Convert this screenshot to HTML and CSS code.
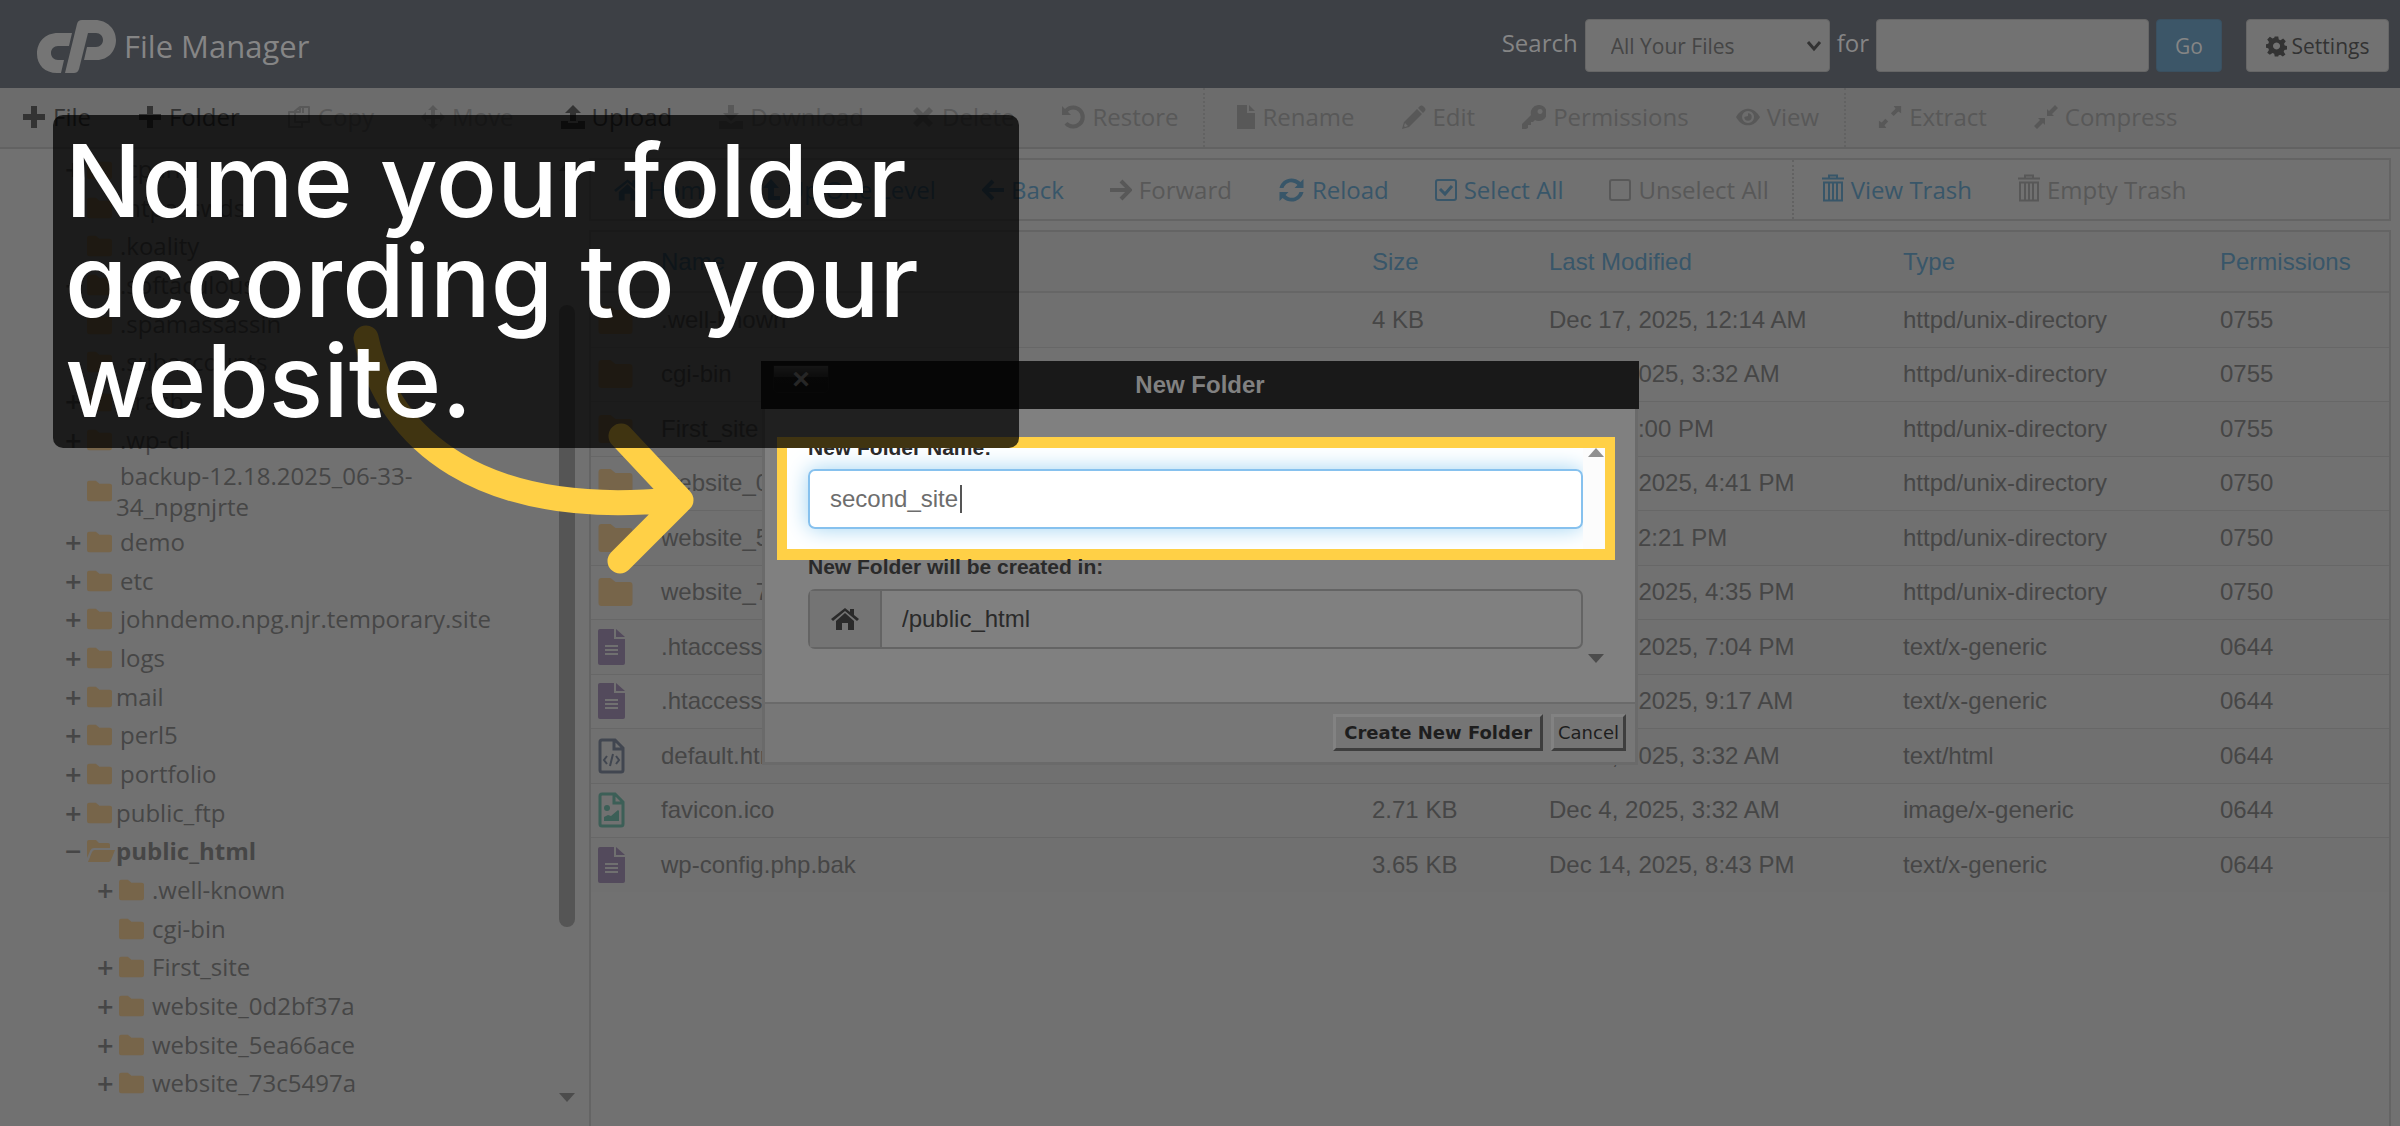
FILE: index.html
```html
<!DOCTYPE html>
<html lang="en">
<head>
    <meta charset="UTF-8">
    <meta name="viewport" content="width=device-width, initial-scale=1.0">
    <title>cPanel File Manager</title>
    <link rel="stylesheet" href="styles.css">
</head>
<body>

    <!-- icon sprite -->
    <svg class="sprite" aria-hidden="true">
        <symbol id="i-plus" viewBox="0 0 24 24"><path d="M9 1h6v8h8v6h-8v8H9v-8H1V9h8z"/></symbol>
        <symbol id="i-copy" viewBox="0 0 24 24"><path d="M8 6l5-4h9v15H8zM13 2v5H8M16 2v6M8 7H2v15h13v-5" fill="none" stroke="currentColor" stroke-width="2" stroke-linejoin="round"/></symbol>
        <symbol id="i-move" viewBox="0 0 24 24"><path d="M12 0l5 5h-3v5h5V7l5 5-5 5v-3h-5v5h3l-5 5-5-5h3v-5H5v3l-5-5 5-5v3h5V5H7z"/></symbol>
        <symbol id="i-upload" viewBox="0 0 24 24"><path d="M12 0l8 8h-5v8H9V8H4zM0 16h7v2h10v-2h7v8H0z"/></symbol>
        <symbol id="i-download" viewBox="0 0 24 24"><path d="M9 0h6v8h5l-8 8-8-8h5zM0 16h7l5 3 5-3h7v8H0z"/></symbol>
        <symbol id="i-delete" viewBox="0 0 24 24"><path d="M6 2l6 6 6-6 4 4-6 6 6 6-4 4-6-6-6 6-4-4 6-6-6-6z"/></symbol>
        <symbol id="i-restore" viewBox="0 0 24 24"><path d="M1 1l3 3a11.500 11.500 0 1 1-.5 15.500l3-2.500a7.500 7.500 0 1 0 .3-10.200L10 10H1z"/></symbol>
        <symbol id="i-rename" viewBox="0 0 18 24"><path d="M0 0h10v8h8v16H0zM12 0l6 6h-6z"/></symbol>
        <symbol id="i-edit" viewBox="0 0 24 24"><path d="M15 4l5 5L7 22l-7 2 2-7zM3 18l-1 3 1 1 3-1zM17 2c2-2 3-2 5 0s2 3 0 5l-1 1-5-5z" fill-rule="evenodd"/></symbol>
        <symbol id="i-key" viewBox="0 0 24 24"><path d="M16 0a8 8 0 1 1-3 15l-2 2H9v3H6v3l-2 1H0v-5l9-9A8 8 0 0 1 16 0zM18 4a2.500 2.500 0 1 0 .1 0z" fill-rule="evenodd"/></symbol>
        <symbol id="i-eye" viewBox="0 0 26 24"><path d="M13 3c6 0 10 4 13 9-3 5-7 9-13 9S3 17 0 12c3-5 7-9 13-9zm0 2.500a6.500 6.500 0 1 0 .1 0zM13 8v3l-4 1a4 4 0 1 0 4-4z" fill-rule="evenodd"/></symbol>
        <symbol id="i-extract" viewBox="0 0 26 24"><path d="M25 0v8l-3-2-5 5-3-3 5-5-2-3zM1 24v-8l3 2 4-4 3 3-4 4 2 3z"/></symbol>
        <symbol id="i-compress" viewBox="0 0 24 24"><path d="M13 11V4l2 2 6-6 3 3-6 6 2 2zM11 13v7l-2-2-6 6-3-3 6-6-2-2z"/></symbol>
        <symbol id="i-home" viewBox="0 0 28 24"><path d="M14 1l5 4V2h4v6l5 4-2 2L14 4 2 14l-2-2zM14 6l9 8v9h-6v-7h-6v7H5v-9z"/></symbol>
        <symbol id="i-up" viewBox="0 0 18 24"><path d="M6 22V10H1l8-9 8 9h-5v8h6v4z"/></symbol>
        <symbol id="i-left" viewBox="0 0 22 24"><path d="M11 3L2 12l9 9M2 12h20" fill="none" stroke="currentColor" stroke-width="4"/></symbol>
        <symbol id="i-right" viewBox="0 0 22 24"><path d="M11 3l9 9-9 9M20 12H0" fill="none" stroke="currentColor" stroke-width="4"/></symbol>
        <symbol id="i-reload" viewBox="0 0 26 24"><path d="M1 10C3 1 14-3 22 4l3-3v9h-9l3-3C14 2 7 4 5 10zM25 14c-2 9-13 13-21 6l-3 3v-9h9l-3 3c5 5 12 3 14-3z"/></symbol>
        <symbol id="i-check" viewBox="0 0 22 24"><rect x="1" y="2" width="20" height="20" rx="2" fill="none" stroke="currentColor" stroke-width="2"/><path d="M5 11l5 5 7-8" fill="none" stroke="currentColor" stroke-width="3"/></symbol>
        <symbol id="i-square" viewBox="0 0 22 24"><rect x="1" y="2" width="20" height="20" rx="2" fill="none" stroke="currentColor" stroke-width="2"/></symbol>
        <symbol id="i-trash" viewBox="0 0 22 27"><path d="M0 4h22M7 4V1h8v3" fill="none" stroke="currentColor" stroke-width="2"/><path d="M2 8h18v18H2zM7 8v18M11 8v18M15 8v18" fill="none" stroke="currentColor" stroke-width="2"/></symbol>
        <symbol id="i-gear" viewBox="0 0 24 24"><path d="M10 1h4l.6 3.500 2 1 3-2 3 3-2 3 .8 2 3 .5v4l-3.400.6-.8 2 2 3-3 2.400-3-2-2 .8L14 24h-4l-.6-3.200-2-.8-3 2-3-2.400 2-3-.8-2L0 14v-4l2.600-.5.8-2-2-3 3-3 3 2 2-1zM12 8a4 4 0 1 0 .1 0z" fill-rule="evenodd"/></symbol>
        <symbol id="i-folder" viewBox="0 0 34 28"><path d="M3 0h9l5 4h14a3 3 0 0 1 3 3v18a3 3 0 0 1-3 3H3a3 3 0 0 1-3-3V3a3 3 0 0 1 3-3z"/></symbol>
        <symbol id="i-folder-open" viewBox="0 0 28 22"><path d="M2 0h7l3 3h9a2 2 0 0 1 2 2v3H7c-2 0-3 1-4 3l-3 7V2a2 2 0 0 1 2-2zM8 10h20l-4 10a3 3 0 0 1-3 2H1l4-10c1-1 1-2 3-2z"/></symbol>
        <symbol id="i-text" viewBox="0 0 27 36"><path d="M2 0h14v10h11v24a2 2 0 0 1-2 2H2a2 2 0 0 1-2-2V2a2 2 0 0 1 2-2zM18 0l9 8h-9zM7 16v2h13v-2zM7 20v2h13v-2zM7 24v2h13v-2z" fill-rule="evenodd"/></symbol>
        <symbol id="i-code" viewBox="0 0 27 36"><path d="M4 2h13l8 8v22a2 2 0 0 1-2 2H4a2 2 0 0 1-2-2V4a2 2 0 0 1 2-2zM16 2v9h9" fill="none" stroke="currentColor" stroke-width="3"/><path d="M9 18l-3 4 3 4M18 18l3 4-3 4M15 16l-3 12" fill="none" stroke="currentColor" stroke-width="2"/></symbol>
        <symbol id="i-image" viewBox="0 0 27 36"><path d="M4 2h13l8 8v22a2 2 0 0 1-2 2H4a2 2 0 0 1-2-2V4a2 2 0 0 1 2-2zM16 2v9h9" fill="none" stroke="currentColor" stroke-width="3"/><circle cx="9" cy="16" r="3"/><path d="M6 29v-4l4-2 3 1 7-6 1 1v10z"/></symbol>
    </svg>

    <header class="header">
        <svg class="logo" viewBox="0 0 79 53" fill="currentColor" aria-hidden="true">
            <path d="M35 13l-3 13H21c-4 0-7 3-7 7s3 7 7 7h6l-3 13h-4C8 53 0 45 0 34c0-12 8-21 21-21z"/>
            <path d="M40 4c1-3 2-4 5-4h13c12 0 21 9 21 20S71 40 60 40H47l3-13h9c4 0 7-3 7-7s-3-7-7-7h-8l-9 36c-1 3-3 4-5 4h-9z"/>
        </svg>
        <h1>File Manager</h1>
        <form class="search">
            <label for="scope">Search</label>
            <select id="scope"><option>All Your Files</option></select>
            <label for="query">for</label>
            <input type="text" id="query">
            <button type="button" class="go">Go</button>
            <button type="button" class="settings"><svg><use href="#i-gear"/></svg>Settings</button>
        </form>
    </header>

    <nav class="toolbar">
        <a href="#" class="on"><svg><use href="#i-plus"/></svg>File</a>
        <a href="#" class="on"><svg><use href="#i-plus"/></svg>Folder</a>
        <a href="#"><svg><use href="#i-copy"/></svg>Copy</a>
        <a href="#"><svg><use href="#i-move"/></svg>Move</a>
        <a href="#" class="on"><svg><use href="#i-upload"/></svg>Upload</a>
        <a href="#"><svg><use href="#i-download"/></svg>Download</a>
        <a href="#"><svg><use href="#i-delete"/></svg>Delete</a>
        <a href="#" class="last"><svg><use href="#i-restore"/></svg>Restore</a>
        <a href="#" class="first"><svg class="slim"><use href="#i-rename"/></svg>Rename</a>
        <a href="#"><svg><use href="#i-edit"/></svg>Edit</a>
        <a href="#"><svg><use href="#i-key"/></svg>Permissions</a>
        <a href="#" class="last"><svg><use href="#i-eye"/></svg>View</a>
        <a href="#" class="first"><svg><use href="#i-extract"/></svg>Extract</a>
        <a href="#"><svg><use href="#i-compress"/></svg>Compress</a>
    </nav>

    <main class="main">
        <aside class="sidebar">
            <ul class="tree">
                <li><i>+</i><svg><use href="#i-folder"/></svg><a href="#">.cpanel</a></li>
                <li><i></i><svg><use href="#i-folder"/></svg><a href="#">.htpasswds</a></li>
                <li><i></i><svg><use href="#i-folder"/></svg><a href="#">.koality</a></li>
                <li><i>+</i><svg><use href="#i-folder"/></svg><a href="#">.softaculous</a></li>
                <li><i></i><svg><use href="#i-folder"/></svg><a href="#">.spamassassin</a></li>
                <li><i></i><svg><use href="#i-folder"/></svg><a href="#">.subaccounts</a></li>
                <li><i>+</i><svg><use href="#i-folder"/></svg><a href="#">.trash</a></li>
                <li><i>+</i><svg><use href="#i-folder"/></svg><a href="#">.wp-cli</a></li>
                <li class="long"><i></i><svg><use href="#i-folder"/></svg><a href="#">backup-12.18.2025_06-33-34_npgnjrte</a></li>
                <li><i>+</i><svg><use href="#i-folder"/></svg><a href="#">demo</a></li>
                <li><i>+</i><svg><use href="#i-folder"/></svg><a href="#">etc</a></li>
                <li><i>+</i><svg><use href="#i-folder"/></svg><a href="#">johndemo.npg.njr.temporary.site</a></li>
                <li><i>+</i><svg><use href="#i-folder"/></svg><a href="#">logs</a></li>
                <li class="tight"><i>+</i><svg><use href="#i-folder"/></svg><a href="#">mail</a></li>
                <li><i>+</i><svg><use href="#i-folder"/></svg><a href="#">perl5</a></li>
                <li><i>+</i><svg><use href="#i-folder"/></svg><a href="#">portfolio</a></li>
                <li class="tight"><i>+</i><svg><use href="#i-folder"/></svg><a href="#">public_ftp</a></li>
                <li class="open"><i>−</i><svg><use href="#i-folder-open"/></svg><a href="#">public_html</a></li>
                <li class="sub"><i>+</i><svg><use href="#i-folder"/></svg><a href="#">.well-known</a></li>
                <li class="sub"><i></i><svg><use href="#i-folder"/></svg><a href="#">cgi-bin</a></li>
                <li class="sub"><i>+</i><svg><use href="#i-folder"/></svg><a href="#">First_site</a></li>
                <li class="sub"><i>+</i><svg><use href="#i-folder"/></svg><a href="#">website_0d2bf37a</a></li>
                <li class="sub"><i>+</i><svg><use href="#i-folder"/></svg><a href="#">website_5ea66ace</a></li>
                <li class="sub"><i>+</i><svg><use href="#i-folder"/></svg><a href="#">website_73c5497a</a></li>
            </ul>
            <div class="scroll">
                <span class="arrow-up"></span>
                <span class="thumb"></span>
                <span class="arrow-down"></span>
            </div>
        </aside>

        <section class="content">
            <nav class="actions">
                <a href="#" class="on"><svg class="wide"><use href="#i-home"/></svg>Home</a>
                <a href="#" class="on"><svg class="slim"><use href="#i-up"/></svg>Up One Level</a>
                <a href="#" class="on"><svg><use href="#i-left"/></svg>Back</a>
                <a href="#"><svg><use href="#i-right"/></svg>Forward</a>
                <a href="#" class="on"><svg class="wide"><use href="#i-reload"/></svg>Reload</a>
                <a href="#" class="on"><svg><use href="#i-check"/></svg>Select All</a>
                <a href="#" class="last"><svg><use href="#i-square"/></svg>Unselect All</a>
                <a href="#" class="on first"><svg class="trash"><use href="#i-trash"/></svg>View Trash</a>
                <a href="#"><svg class="trash"><use href="#i-trash"/></svg>Empty Trash</a>
            </nav>

            <div class="files">
                <table>
                    <colgroup>
                        <col class="c-icon"><col><col class="c-size"><col class="c-date"><col class="c-type"><col class="c-perm">
                    </colgroup>
                    <thead>
                        <tr><th></th><th>Name</th><th>Size</th><th>Last Modified</th><th>Type</th><th>Permissions</th></tr>
                    </thead>
                    <tbody>
                        <tr><td><svg class="folder"><use href="#i-folder"/></svg></td><td>.well-known</td><td>4 KB</td><td>Dec 17, 2025, 12:14 AM</td><td>httpd/unix-directory</td><td>0755</td></tr>
                        <tr><td><svg class="folder"><use href="#i-folder"/></svg></td><td>cgi-bin</td><td>4 KB</td><td>Dec 4, 2025, 3:32 AM</td><td>httpd/unix-directory</td><td>0755</td></tr>
                        <tr><td><svg class="folder"><use href="#i-folder"/></svg></td><td>First_site</td><td>4 KB</td><td>Today, 1:00 PM</td><td>httpd/unix-directory</td><td>0755</td></tr>
                        <tr><td><svg class="folder"><use href="#i-folder"/></svg></td><td>website_0d2bf37a</td><td>4 KB</td><td>Dec 14, 2025, 4:41 PM</td><td>httpd/unix-directory</td><td>0750</td></tr>
                        <tr><td><svg class="folder"><use href="#i-folder"/></svg></td><td>website_5ea66ace</td><td>4 KB</td><td>Today, 12:21 PM</td><td>httpd/unix-directory</td><td>0750</td></tr>
                        <tr><td><svg class="folder"><use href="#i-folder"/></svg></td><td>website_73c5497a</td><td>4 KB</td><td>Dec 14, 2025, 4:35 PM</td><td>httpd/unix-directory</td><td>0750</td></tr>
                        <tr><td><svg class="text"><use href="#i-text"/></svg></td><td>.htaccess</td><td>1 KB</td><td>Dec 14, 2025, 7:04 PM</td><td>text/x-generic</td><td>0644</td></tr>
                        <tr><td><svg class="text"><use href="#i-text"/></svg></td><td>.htaccess.bak</td><td>1 KB</td><td>Dec 14, 2025, 9:17 AM</td><td>text/x-generic</td><td>0644</td></tr>
                        <tr><td><svg class="code"><use href="#i-code"/></svg></td><td>default.html</td><td>1 KB</td><td>Dec 4, 2025, 3:32 AM</td><td>text/html</td><td>0644</td></tr>
                        <tr><td><svg class="image"><use href="#i-image"/></svg></td><td>favicon.ico</td><td>2.71 KB</td><td>Dec 4, 2025, 3:32 AM</td><td>image/x-generic</td><td>0644</td></tr>
                        <tr><td><svg class="text"><use href="#i-text"/></svg></td><td>wp-config.php.bak</td><td>3.65 KB</td><td>Dec 14, 2025, 8:43 PM</td><td>text/x-generic</td><td>0644</td></tr>
                    </tbody>
                </table>
            </div>
        </section>
    </main>

    <div class="overlay">
        <form class="modal">
            <div class="modal-head">
                <button type="button" class="close" aria-label="Close">×</button>
                <h2>New Folder</h2>
            </div>
            <div class="modal-body">
                <div class="highlight">
                    <div class="field">
                        <label for="name">New Folder Name:</label>
                        <div class="focused">
                            <input type="text" id="name" value="second_site">
                            <span class="caret"></span>
                        </div>
                    </div>
                    <div class="strip"><span class="arrow-up"></span></div>
                </div>
                <label for="path">New Folder will be created in:</label>
                <div class="group">
                    <span class="addon"><svg><use href="#i-home"/></svg></span>
                    <input type="text" id="path" value="/public_html">
                </div>
                <span class="arrow-down"></span>
            </div>
            <div class="modal-foot">
                <button type="button" class="primary">Create New Folder</button>
                <button type="button">Cancel</button>
            </div>
        </form>
    </div>

    <svg class="pointer" viewBox="0 0 360 270" fill="none" stroke="#ffd046" stroke-width="25" stroke-linecap="round" stroke-linejoin="round" aria-hidden="true">
        <path d="M16 28C38 130 130 208 322 190M271 126l60 64-61 61"/>
    </svg>

    <div class="callout">Name your folder according to your website.</div>

</body>
</html>
```
FILE: styles.css
```css
* {
    box-sizing: border-box;
}
body {
    margin: 0;
    min-height: 100vh;
    display: flex;
    flex-direction: column;
    position: relative;
    background-color: #717171;
    color: #464646;
    font-family: "Open Sans", "Noto Sans", sans-serif;
    font-size: 24px;
    line-height: 32px;
}
svg {
    fill: currentColor;
    flex: none;
}
a {
    color: inherit;
    text-decoration: none;
}
input, select, button {
    font: inherit;
    color: inherit;
    margin: 0;
}
.sprite {
    display: none;
}

/* header */
.header {
    display: flex;
    align-items: center;
    height: 88px;
    padding: 0 11px 0 37px;
    background-color: #3d4045;
    color: #858585;
}
.logo {
    width: 79px;
    height: 53px;
    margin-top: 5px;
    color: #757575;
}
h1 {
    margin: 3px 0 0 8px;
    font-size: 31px;
    font-weight: normal;
}
.search {
    display: flex;
    align-items: center;
    gap: 7px;
    margin-left: auto;
    margin-top: 3px;
}
.search label {
    margin-top: -6px;
}
.search select, .search input, .search button {
    height: 53px;
    border: 1px solid #666;
    border-radius: 4px;
    background-color: #727272;
    color: #454545;
    font-size: 21px;
}
.search select {
    width: 245px;
    padding-left: 25px;
    appearance: none;
    background-image: url("data:image/svg+xml,%3Csvg xmlns='http://www.w3.org/2000/svg' width='16' height='12'%3E%3Cpath d='M2 2l6 7 6-7' fill='none' stroke='%23333' stroke-width='3'/%3E%3C/svg%3E");
    background-repeat: no-repeat;
    background-position: right 7px center;
}
.search input {
    width: 273px;
}
.search .go {
    width: 66px;
    background-color: #3c5668;
    border-color: #3a5060;
    color: #858585;
}
.search .settings {
    display: flex;
    align-items: center;
    justify-content: center;
    gap: 5px;
    width: 143px;
    margin-left: 17px;
    color: #333;
}
.settings svg {
    width: 21px;
    height: 22px;
}

/* toolbars */
.toolbar, .actions {
    display: flex;
    white-space: nowrap;
    color: #585858;
}
.toolbar {
    height: 61px;
    background-color: #6c6c6c;
    border-bottom: 2px solid #626262;
}
.toolbar a, .actions a {
    display: flex;
    align-items: center;
    gap: 7px;
    padding: 0 23px;
}
.toolbar a {
    padding: 0 25px 2px 22px;
}
.toolbar svg {
    width: 24px;
    height: 24px;
}
.toolbar .slim {
    width: 18px;
}
.toolbar .on {
    color: #333;
}
.toolbar .last, .actions .last {
    border-right: 2px dotted #626262;
}
.toolbar .first {
    padding-left: 32px;
}
.actions {
    height: 63px;
    border: 2px solid #646464;
}
.actions .on {
    color: #385669;
}
.actions .first {
    padding-left: 28px;
}
.actions svg {
    width: 22px;
    height: 24px;
}
.actions .wide {
    width: 27px;
}
.actions .slim {
    width: 18px;
}
.actions .trash {
    height: 30px;
    margin-top: -4px;
}

/* main area */
.main {
    display: flex;
    flex: 1;
}
.sidebar {
    display: flex;
    justify-content: space-between;
    width: 575px;
    padding-bottom: 31px;
}
.tree {
    width: 500px;
    margin: 0;
    padding: 0 0 0 65px;
    list-style: none;
}
.tree li {
    display: flex;
    align-items: center;
    height: 39px;
}
.tree li:nth-child(3n) {
    height: 38px;
}
.tree i {
    width: 22px;
    font-size: 29px;
    font-style: normal;
    font-weight: 600;
}
.tree svg {
    width: 25px;
    height: 22px;
    margin-right: 8px;
    color: #77654a;
}
.tree .tight svg {
    margin-right: 4px;
}
.tree .open svg {
    width: 28px;
    margin-right: 1px;
}
.tree .open {
    font-weight: bold;
}
.tree .sub {
    padding-left: 32px;
}
.tree li.long {
    height: 63px;
}
.long a {
    width: 320px;
    text-indent: 4px;
    overflow-wrap: anywhere;
    line-height: 31px;
}
.tree .long svg {
    margin-right: 4px;
}
.scroll {
    display: flex;
    flex-direction: column;
    justify-content: space-between;
    width: 16px;
    padding-top: 13px;
}
.thumb {
    width: 16px;
    height: 622px;
    border-radius: 8px;
    background-color: #555;
    margin-bottom: 32px;
}
.arrow-up, .arrow-down {
    display: block;
    border: 8px solid transparent;
    border-top-width: 0;
    border-bottom: 9px solid #4c4c4c;
    width: 0;
}
.arrow-down {
    border-top: 9px solid #4c4c4c;
    border-bottom-width: 0;
}
.content {
    display: flex;
    flex-direction: column;
    flex: 1;
    gap: 9px;
    padding: 9px 9px 2px 14px;
}
.files {
    flex: 1;
    border: 2px solid #646464;
    border-bottom-color: #484848;
}

/* file list */
table {
    width: 100%;
    table-layout: fixed;
    border-collapse: collapse;
    font-family: "Liberation Sans", Arial, sans-serif;
    text-align: left;
    white-space: nowrap;
}
.c-icon {
    width: 70px;
}
.c-size {
    width: 177px;
}
.c-date {
    width: 354px;
}
.c-type {
    width: 317px;
}
.c-perm {
    width: 169px;
}
th, td {
    padding: 0;
}
th {
    height: 60px;
    background-color: #6f6f6f;
    border-bottom: 2px solid #666;
    color: #385669;
    font-weight: normal;
}
tbody tr {
    height: 55px;
}
tbody tr:nth-child(even) {
    height: 54px;
}
tbody tr:nth-child(odd) {
    background-color: #707070;
}
td {
    border-bottom: 1px solid #676767;
}
tr:last-child td {
    border-bottom: 0;
}
td svg {
    display: block;
    width: 27px;
    height: 36px;
    margin-left: 7px;
}
td .folder {
    width: 35px;
    height: 28px;
    color: #77654a;
}
td .text {
    color: #534a5c;
}
td .code {
    color: #414650;
}
td .image {
    color: #3c5f57;
}

/* dialog */
.overlay {
    position: absolute;
    top: 361px;
    left: 0;
    right: 0;
    display: flex;
    justify-content: center;
    font-family: "Liberation Sans", Arial, sans-serif;
}
.modal {
    width: 878px;
}
.modal-head {
    display: grid;
    grid-template-columns: 56px 1fr 56px;
    align-items: start;
    height: 48px;
    padding: 4px 12px 0;
    background-color: #191919;
    color: #818181;
}
h2 {
    margin: 4px 0 0;
    font-size: 24px;
    text-align: center;
}
.close {
    height: 28px;
    padding: 0;
    border: 1px solid #202020;
    border-radius: 0 0 5px 5px;
    background: linear-gradient(#555 0, #333 11px, #1c1c1c 11px, #1a1a1a);
    color: #999;
    font-size: 30px;
    font-weight: bold;
    line-height: 20px;
}
.modal-body {
    display: flex;
    flex-direction: column;
    margin: 0 1px;
    padding: 28px 20px 39px 13px;
    border: solid #6a6a6a;
    border-width: 0 3px 2px;
    background-color: #808080;
    color: #2a2a2a;
}
.modal-body label {
    display: block;
    font-size: 21px;
    font-weight: bold;
    line-height: 24px;
}
.highlight {
    display: flex;
    height: 123px;
    margin-left: -1px;
    border: solid #ffd046;
    border-width: 11px 10px;
    background-color: #fff;
    overflow: hidden;
}
.field {
    flex: 1;
    margin-top: -12px;
    padding-left: 21px;
}
.focused {
    display: flex;
    align-items: center;
    height: 60px;
    margin-top: 9px;
    border: 2px solid #86c1ee;
    border-radius: 7px;
    box-shadow: 0 0 22px #9fd3f2;
}
.focused input {
    width: 130px;
    margin-left: 20px;
    padding: 0;
    border: 0;
    background: none;
    color: #6d6d6d;
    outline: 0;
}
.caret {
    width: 2px;
    height: 28px;
    background-color: #555;
}
.strip {
    width: 22px;
    padding-left: 5px;
    background-color: #fcfcfc;
}
.strip .arrow-up {
    border-bottom-color: #909090;
}
.modal-body > label {
    margin: -5px 0 10px 30px;
}
.group {
    display: flex;
    height: 60px;
    margin: 0 32px 0 30px;
    border: 2px solid #646464;
    border-radius: 7px;
}
.addon {
    display: flex;
    align-items: center;
    justify-content: center;
    width: 72px;
    border-right: 2px solid #646464;
    background-color: #747474;
}
.addon svg {
    width: 28px;
    height: 24px;
}
.group input {
    flex: 1;
    padding: 0 20px;
    border: 0;
    background: none;
}
.modal-body > .arrow-down {
    align-self: flex-end;
    margin: 5px 11px 0 0;
}
.modal-foot {
    display: flex;
    justify-content: flex-end;
    gap: 8px;
    margin: 0 1px;
    padding: 10px 9px 11px 0;
    border: solid #6a6a6a;
    border-width: 0 3px 3px;
    background-color: #777;
}
.modal-foot button {
    height: 37px;
    padding: 0 4px;
    border: 3px solid;
    border-color: #828282 #3e3e3e #3e3e3e #828282;
    background-color: #757575;
    color: #1e1e1e;
    font-family: "DejaVu Sans", Verdana, sans-serif;
    font-size: 18px;
    line-height: 28px;
}
.modal-foot .primary {
    padding: 0 8px;
    font-weight: bold;
}

/* tutorial annotations */
.pointer {
    position: absolute;
    top: 310px;
    left: 350px;
    width: 360px;
    height: 270px;
    fill: none;
}
.callout {
    position: absolute;
    top: 115px;
    left: 53px;
    width: 966px;
    padding: 15px 12px 18px;
    border-radius: 10px;
    background-color: rgba(0, 0, 0, .75);
    color: #fff;
    font-family: Inter, "Open Sans", sans-serif;
    font-size: 101px;
    font-weight: 500;
    line-height: 100px;
    font-feature-settings: "cv11";
}
```
